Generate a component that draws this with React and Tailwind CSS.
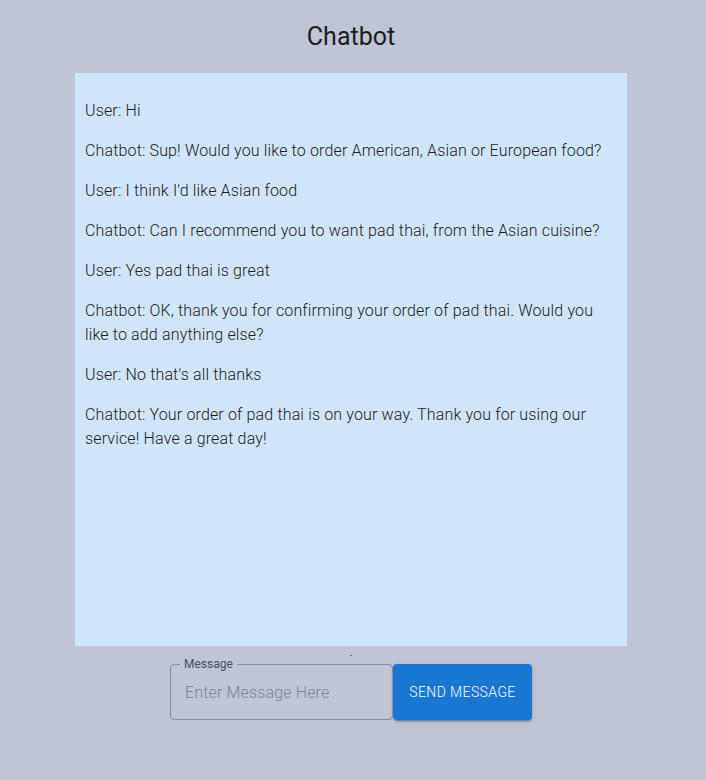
const messages = [
  "User: Hi",
  "Chatbot: Sup! Would you like to order American, Asian or European food?",
  "User: I think I'd like Asian food",
  "Chatbot: Can I recommend you to want pad thai, from the Asian cuisine?",
  "User: Yes pad thai is great",
  "Chatbot: OK, thank you for confirming your order of pad thai. Would you like to add anything else?",
  "User: No that's all thanks",
  "Chatbot: Your order of pad thai is on your way. Thank you for using our service! Have a great day!",
];

export default function App() {
  return (
    <div className="min-h-[780px] bg-[#bfc5d5] font-['Roboto',sans-serif] text-[#1c1c1c]">
      <div className="w-[702px]">
        <h1 className="pt-[21px] text-center text-[25px] leading-[32px] font-normal">Chatbot</h1>
        <div className="mx-auto mt-[20px] w-[552px] h-[573px] bg-[#cfe5fa] px-[10px] pt-[26px]">
          {messages.map((m, i) => (
            <p key={i} className="mb-[16px] text-[16px] leading-[24px] font-light tracking-[0.15px]">
              {m}
            </p>
          ))}
        </div>
        <div className="flex justify-center h-[18px] text-[10px] leading-[14px]">.</div>
        <div className="flex justify-center">
          <div className="relative w-[223px] h-[56px] rounded-[4px] border border-[#8b909c]">
            <span className="absolute -top-[9px] left-[9px] bg-[#bfc5d5] px-[4px] text-[12px] leading-[16px] text-[#4b4f58]">
              Message
            </span>
            <input
              placeholder="Enter Message Here"
              className="w-full h-full bg-transparent px-[14px] text-[16px] font-light tracking-[0.15px] outline-none placeholder:text-[#80858f]"
            />
          </div>
          <button className="w-[139px] h-[56px] rounded-[4px] bg-[#1976d2] text-white text-[14px] font-light tracking-[0.4px] shadow-[0_3px_1px_-2px_rgba(0,0,0,0.2),0_2px_2px_0_rgba(0,0,0,0.14),0_1px_5px_0_rgba(0,0,0,0.12)]">
            SEND MESSAGE
          </button>
        </div>
      </div>
    </div>
  );
}
